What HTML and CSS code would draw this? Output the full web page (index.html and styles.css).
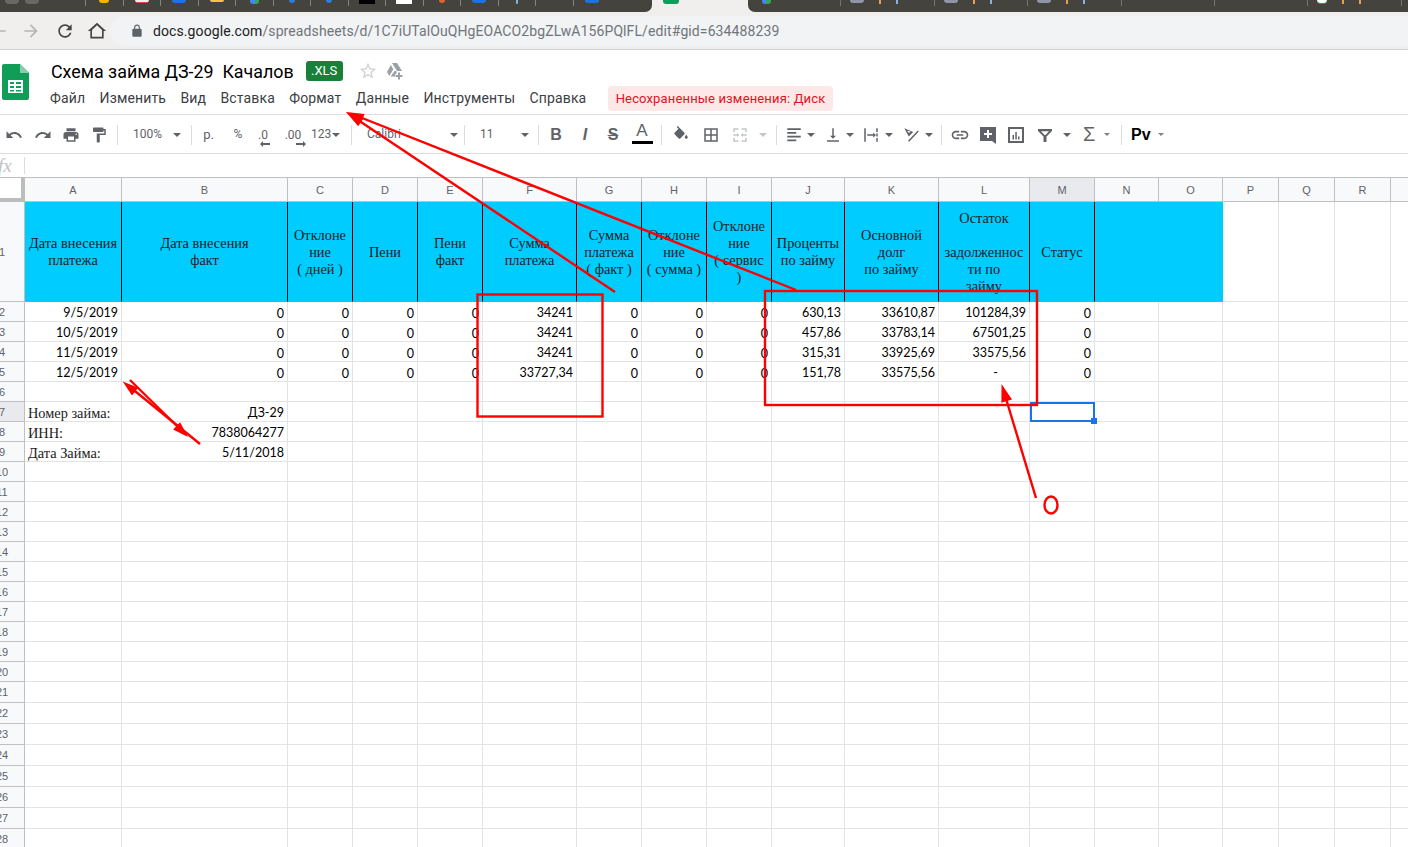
FILE: index.html
```html
<!DOCTYPE html>
<html lang="ru">
<head>
    <meta charset="UTF-8">
    <meta name="viewport" content="width=device-width, initial-scale=1.0">
    <title>Схема займа ДЗ-29 Качалов</title>
    <link rel="stylesheet" href="styles.css">
</head>
<body>

<!-- tab strip, only the bottom of it is on the picture -->
<div class="tabstrip">
    <div class="tabs-left">
        <div class="winbtns"><i></i><i></i></div>
        <div class="tab"><i class="fav fav-yellow"></i></div>
        <div class="tab"><i class="fav fav-gmail"></i></div>
        <div class="tab"><i class="fav fav-blue"></i></div>
        <div class="tab"><i class="fav fav-amber"></i></div>
        <div class="tab"><i class="fav fav-maps"></i></div>
        <div class="tab"><i class="fav fav-drop"></i></div>
        <div class="tab"><i class="fav fav-drop"></i></div>
        <div class="tab"><i class="fav fav-black"></i></div>
        <div class="tab"><i class="fav fav-white"></i></div>
        <div class="tab"><i class="fav fav-orange"></i></div>
        <div class="tab"><i class="fav fav-blue"></i></div>
        <div class="tab"><i class="fav fav-bar"></i></div>
        <div class="tab"></div>
        <div class="tab"><i class="fav fav-blue"></i></div>
    </div>
    <div class="tab-active"><i class="fav fav-sheets"></i></div>
    <div class="tabs-right">
        <div class="wide"><i class="fav fav-maps"></i></div>
        <div class="wide"><i class="fav fav-thumb"></i><i class="fav-o"></i><i class="fav-b"></i></div>
        <div class="wide"><i class="fav fav-thumb"></i><i class="fav-o"></i><i class="fav-b"></i></div>
        <div class="wide"><i class="fav fav-thumb"></i><i class="fav-o"></i><i class="fav-b"></i></div>
        <div class="wide"></div>
        <div class="wide"></div>
        <div class="wide"><i class="fav fav-ring"></i><i class="fav-o"></i><i class="fav-o"></i></div>
    </div>
</div>

<div class="addressbar">
    <svg class="nav-back" width="20" height="20" viewBox="0 0 24 24"><path fill="#b5b5b5" d="M20 11H7.830l5.590-5.590L12 4l-8 8 8 8 1.410-1.410L7.830 13H20z"/></svg>
    <svg class="nav-fwd" width="20" height="20" viewBox="0 0 24 24"><path fill="#b5b5b5" d="M12 4l-1.410 1.410L16.170 11H4v2h12.170l-5.580 5.590L12 20l8-8z"/></svg>
    <svg class="nav-reload" width="20" height="20" viewBox="0 0 24 24"><path fill="#444" d="M17.650 6.350C16.200 4.900 14.210 4 12 4c-4.420 0-7.990 3.580-7.990 8s3.570 8 7.990 8c3.730 0 6.840-2.550 7.730-6h-2.080c-.820 2.330-3.040 4-5.650 4-3.310 0-6-2.690-6-6s2.690-6 6-6c1.660 0 3.140.690 4.220 1.780L13 11h7V4l-2.350 2.350z"/></svg>
    <svg class="nav-home" width="20" height="20" viewBox="0 0 24 24"><path fill="#444" fill-rule="evenodd" d="M12 2L1 12h3v9h16v-9h3zM12 5.200l6 5.500V19H6v-8.300z"/></svg>
    <div class="omnibox">
        <svg width="14" height="14" viewBox="0 0 24 24"><path fill="#5f6368" d="M18 8h-1V6c0-2.760-2.240-5-5-5S7 3.240 7 6v2H6c-1.100 0-2 .900-2 2v10c0 1.100.900 2 2 2h12c1.100 0 2-.900 2-2V10c0-1.100-.900-2-2-2zM9 6c0-1.660 1.340-3 3-3s3 1.340 3 3v2H9V6z"/></svg>
        <span class="url"><b>docs.google.com</b>/spreadsheets/d/1C7iUTalOuQHgEOACO2bgZLwA156PQlFL/edit#gid=634488239</span>
    </div>
</div>

<header class="docheader">
    <svg class="logo" width="27" height="36" viewBox="0 0 27 36">
        <path fill="#0f9d58" d="M2 0h16l9 9v25a2 2 0 0 1-2 2H2a2 2 0 0 1-2-2V2a2 2 0 0 1 2-2z"/>
        <path fill="#87cdab" d="M18 0l9 9h-9z"/>
        <path fill="#fff" fill-rule="evenodd" d="M6 16h15v13H6zM8 18v2h4v-2zM14 18v2h5v-2zM8 22v2h4v-2zM14 22v2h5v-2zM8 26v1.500h4V26zM14 26v1.500h5V26z"/>
    </svg>
    <div class="docinfo">
        <div class="titlerow">
            <span class="doctitle">Схема займа ДЗ-29&nbsp; Качалов</span>
            <span class="xls">.XLS</span>
            <svg class="star" width="20" height="20" viewBox="0 0 24 24"><path fill="#d2d2d2" d="M22 9.240l-7.190-.620L12 2 9.190 8.630 2 9.240l5.460 4.730L5.820 21 12 17.270 18.180 21l-1.630-7.030L22 9.240zM12 15.400l-3.760 2.270 1-4.280-3.320-2.880 4.380-.380L12 6.100l1.710 4.040 4.380.380-3.320 2.880 1 4.280L12 15.400z"/></svg>
            <svg class="driveadd" width="18" height="18" viewBox="0 0 18 18"><path fill="#9aa0a6" d="M6 1h5l5 8h-5zM4.800 3l2.500 4.200L3.300 14 1 10zM8.500 9h2v3h-1.500v2.500H4.600z"/><path fill="#9aa0a6" d="M12 10.500h2V13h2.500v2H14v2.500h-2V15H9.500v-2H12z"/></svg>
        </div>
        <nav class="menubar">
            <a>Файл</a>
            <a>Изменить</a>
            <a>Вид</a>
            <a>Вставка</a>
            <a>Формат</a>
            <a>Данные</a>
            <a>Инструменты</a>
            <a>Справка</a>
            <span class="unsaved">Несохраненные изменения: Диск</span>
        </nav>
    </div>
</header>

<div class="toolbar">
    <div class="tool t-28"><svg width="18" height="18" viewBox="0 0 24 24"><path d="M12.500 8c-2.650 0-5.050.990-6.900 2.600L2 7v9h9l-3.620-3.620c1.390-1.160 3.160-1.880 5.120-1.880 3.540 0 6.550 2.310 7.600 5.500l2.370-.780C21.080 11.030 17.150 8 12.500 8z"/></svg></div>
    <div class="tool t-29"><svg width="18" height="18" viewBox="0 0 24 24"><path d="M18.400 10.600C16.550 8.990 14.150 8 11.500 8c-4.650 0-8.580 3.030-9.960 7.220L3.900 16c1.050-3.190 4.050-5.500 7.600-5.500 1.950 0 3.730.720 5.120 1.880L13 16h9V7l-3.600 3.600z"/></svg></div>
    <div class="tool t-28"><svg width="18" height="18" viewBox="0 0 24 24"><path d="M19 8H5c-1.660 0-3 1.340-3 3v6h4v4h12v-4h4v-6c0-1.660-1.340-3-3-3zm-3 11H8v-5h8v5zm3-7c-.550 0-1-.450-1-1s.450-1 1-1 1 .450 1 1-.450 1-1 1zm-1-9H6v4h12V3z"/></svg></div>
    <div class="tool t-28"><svg width="18" height="18" viewBox="0 0 24 24"><path d="M18 4V3c0-.550-.450-1-1-1H5c-.550 0-1 .450-1 1v4c0 .550.450 1 1 1h12c.550 0 1-.450 1-1V6h1v4H9v11c0 .550.450 1 1 1h2c.550 0 1-.450 1-1v-9h8V4h-3z"/></svg></div>
    <i class="sep sep-4"></i>
    <div class="tool t-zoom"><span class="tlabel">100%</span><i class="caret"></i></div>
    <i class="sep sep-3"></i>
    <div class="tool t-33 tlabel">р.</div>
    <div class="tool t-26 tlabel small">%</div>
    <div class="tool t-24 decimals tlabel small">.0<svg width="10" height="6" viewBox="0 0 10 6"><path d="M0 3l3-3v2h7v2H3v2z"/></svg></div>
    <div class="tool t-36 decimals tlabel small">.00<svg width="10" height="6" viewBox="0 0 10 6"><path d="M10 3L7 0v2H0v2h7v2z"/></svg></div>
    <div class="tool t-num"><span class="tlabel small">123</span><i class="caret"></i></div>
    <i class="sep sep-4"></i>
    <div class="tool t-font"><span class="tlabel">Calibri</span><i class="caret"></i></div>
    <i class="sep sep-4"></i>
    <div class="tool t-size"><span class="tlabel">11</span><i class="caret"></i></div>
    <i class="sep sep-4"></i>
    <div class="tool t-34 glyph glyph-b">B</div>
    <div class="tool t-24 glyph glyph-i">I</div>
    <div class="tool t-32 glyph glyph-s">S</div>
    <div class="tool t-26 textcolor"><span class="glyph-a">A</span><i class="colorbar"></i></div>
    <i class="sep sep-6"></i>
    <div class="tool t-38"><svg width="18" height="18" viewBox="0 0 24 24"><path d="M16.560 8.940L7.620 0 6.210 1.410l2.380 2.380-5.150 5.150c-.590.590-.590 1.540 0 2.120l5.500 5.500c.290.290.680.440 1.060.440s.770-.150 1.060-.440l5.500-5.500c.590-.580.590-1.530 0-2.120zM19 11.500s-2 2.170-2 3.500c0 1.100.900 2 2 2s2-.900 2-2c0-1.330-2-3.500-2-3.500z"/></svg></div>
    <div class="tool t-22"><svg width="18" height="18" viewBox="0 0 24 24"><path d="M3 3v18h18V3H3zm8 16H5v-6h6v6zm0-8H5V5h6v6zm8 8h-6v-6h6v6zm0-8h-6V5h6v6z"/></svg></div>
    <div class="tool t-36 disabled"><svg width="18" height="18" viewBox="0 0 24 24"><path d="M3 3h7v2H5v3H3zM14 3h7v5h-2V5h-5zM3 16h2v3h5v2H3zM19 16h2v5h-7v-2h5zM3 11h5V9l3 3-3 3v-2H3zM21 11h-5V9l-3 3 3 3v-2h5z"/></svg></div>
    <div class="tool t-10 disabled"><i class="caret"></i></div>
    <i class="sep sep-8"></i>
    <div class="tool t-align"><svg width="18" height="18" viewBox="0 0 24 24"><path d="M3 3h18v2.400H3zM3 8h12v2.400H3zM3 13h18v2.400H3zM3 18h12v2.400H3z"/></svg><i class="caret"></i></div>
    <div class="tool t-valign"><svg width="18" height="18" viewBox="0 0 24 24"><path d="M16 13h-3V3h-2v10H8l4 4 4-4zM4 19v2h16v-2H4z"/></svg><i class="caret"></i></div>
    <div class="tool t-wrap"><svg width="18" height="18" viewBox="0 0 24 24"><path d="M3 3h2v18H3zM19 3h2v5h-2zM19 10h2v4h-2zM19 16h2v5h-2zM7 11h8V8.500l3.500 3.500-3.500 3.500V13H7z"/></svg><i class="caret"></i></div>
    <div class="tool t-wrap"><svg width="18" height="18" viewBox="0 0 24 24"><path fill-rule="evenodd" d="M3 3l12 5-6 6zM6.500 6.300l3 3 2-2zM21 6l1.400 1.400L9.500 21 8 19.600z"/></svg><i class="caret"></i></div>
    <i class="sep sep-4"></i>
    <div class="tool t-36"><svg width="20" height="20" viewBox="0 0 24 24"><path d="M3.900 12c0-1.710 1.390-3.100 3.100-3.100h4V7H7c-2.760 0-5 2.240-5 5s2.240 5 5 5h4v-1.900H7c-1.710 0-3.100-1.390-3.100-3.100zM8 13h8v-2H8v2zm9-6h-4v1.900h4c1.710 0 3.100 1.390 3.100 3.100s-1.390 3.100-3.100 3.100h-4V17h4c2.760 0 5-2.240 5-5s-2.240-5-5-5z"/></svg></div>
    <div class="tool t-20"><svg width="18" height="18" viewBox="0 0 18 18"><path fill-rule="evenodd" d="M1 1h16v17l-4-3H1zM8 4v3H5v2h3v3h2V9h3V7h-3V4z"/></svg></div>
    <div class="tool t-36"><svg width="18" height="18" viewBox="0 0 18 18"><path fill-rule="evenodd" d="M1 1h16v16H1zM3 3v12h12V3zM5.500 9h1.500v4.500H5.500zM8.300 6h1.500v7.500H8.300zM11 10.500h1.500v3H11z"/></svg></div>
    <div class="tool t-filter"><svg width="18" height="18" viewBox="0 0 18 18"><path fill-rule="evenodd" d="M2 3h14v2l-5.500 5.500V16h-3v-5.500L2 5zM5 5.200l3.500 3.800h1L13 5.200z"/></svg><i class="caret"></i></div>
    <div class="tool t-sum"><span class="glyph-sum">Σ</span><i class="caret caret-s"></i></div>
    <i class="sep sep-4"></i>
    <div class="tool t-py"><span class="glyph-py">Pᴠ</span><i class="caret caret-s"></i></div>
</div>

<div class="formulabar">
    <span class="fx">fx</span>
    <i class="fxsep"></i>
</div>

<table class="sheet" id="sheet"></table>

<!-- red marks somebody drew on top of the screenshot -->
<svg class="marks" width="1408" height="847" viewBox="0 0 1408 847">
    <g fill="none" stroke="#f00" stroke-width="2.400">
        <path d="M615 292L352 116"/>
        <path d="M796 290L352 114"/>
        <path d="M1036 498L1004 392"/>
        <path d="M200 444L130 387"/>
        <path d="M130 380L182 431"/>
        <rect x="477.500" y="294.500" width="125" height="122"/>
        <rect x="765" y="291" width="272" height="114"/>
        <ellipse cx="1051" cy="505" rx="6.500" ry="8.500"/>
    </g>
    <g fill="#f00">
        <path d="M346 112L363.800 117.800 358.200 126.200z"/>
        <path d="M346 112L364.500 114 360.900 123.300z"/>
        <path d="M1001.500 384L1012 399.600 1001.400 402.800z"/>
        <path d="M122.700 381.500L138.200 387.700 132 395.500z"/>
        <path d="M188 437L173.100 429.400 180.100 422.200z"/>
    </g>
</svg>

<script src="script.js"></script>
</body>
</html>
```

FILE: styles.css
```css
body {
    margin: 0;
    width: 1408px;
    height: 847px;
    overflow: hidden;
    position: relative;
    background: #fff;
    font-family: Roboto, "Liberation Sans", sans-serif;
    color: #202124;
}

/* tab strip */
.tabstrip {
    display: flex;
    height: 12px;
    background: #f0efee;
    overflow: hidden;
}
.tabs-left, .tabs-right {
    display: flex;
    background: #45433e;
    height: 12px;
}
.tabs-left {
    width: 652px;
    border-bottom-right-radius: 7px;
}
.tabs-right {
    flex: 1;
    border-bottom-left-radius: 7px;
}
.tab-active {
    width: 96px;
    padding-left: 11px;
    box-sizing: border-box;
}
.winbtns {
    width: 85px;
    display: flex;
    gap: 6px;
    padding-left: 5px;
    box-sizing: border-box;
}
.winbtns i {
    width: 14px;
    height: 4px;
    background: #6a6864;
    border-radius: 0 0 7px 7px;
}
.tab {
    width: 37.500px;
    height: 6px;
    border-left: 1px solid #86847f;
    box-sizing: border-box;
    display: flex;
    justify-content: center;
}
.wide {
    width: 93.400px;
    height: 6px;
    border-right: 1px solid #77756f;
    box-sizing: border-box;
    display: flex;
    gap: 15px;
    padding-left: 9px;
}
.wide:first-child {
    padding-left: 14px;
}
.fav {
    display: block;
    width: 14px;
    height: 4px;
    border-radius: 0 0 3px 3px;
}
.fav-yellow { background: #f4b400; width: 10px; height: 3px; border-radius: 0 0 5px 5px; }
.fav-gmail { background: #eee; border-bottom: 1px solid #d44; height: 2px; }
.fav-blue { background: #1a73e8; height: 3px; }
.fav-amber { background: #f6c445; height: 2px; }
.fav-maps { background: linear-gradient(90deg, #4285f4 50%, #34a853 50%); width: 9px; height: 4px; }
.fav-drop { background: #2a7de1; width: 6px; height: 3px; border-radius: 0 0 3px 3px; }
.fav-black { background: #000; height: 4px; border-radius: 0; width: 16px; }
.fav-white { background: #fff; height: 4px; border-radius: 0; width: 16px; }
.fav-orange { background: #e2622b; width: 6px; height: 3px; }
.fav-bar { background: #8ab4d8; width: 2px; }
.fav-sheets { background: #0f9d58; width: 16px; height: 4px; }
.fav-thumb { background: #8f96a8; width: 14px; height: 3px; }
.fav-ring { background: #fff; width: 10px; height: 3px; border-bottom: 1px solid #1e9e5a; border-radius: 0 0 5px 5px; }
.fav-o, .fav-b {
    display: block;
    width: 2px;
    height: 4px;
    background: #e8a14f;
}
.fav-b {
    background: #8ab4d8;
}

/* address bar */
.addressbar {
    height: 37px;
    background: #f0efee;
    border-bottom: 1px solid #d2d2d2;
    display: flex;
    align-items: center;
    box-sizing: content-box;
}
.nav-back {
    margin-left: -11px;
    margin-right: 12px;
}
.nav-fwd {
    margin-right: 14px;
}
.nav-reload {
    margin-right: 12px;
}
.omnibox {
    margin-left: 3px;
    flex: 1;
    height: 30px;
    background: #f1f3f4;
    border-radius: 15px 0 0 15px;
    display: flex;
    align-items: center;
    gap: 9px;
    padding-left: 20px;
}
.url {
    font-size: 14px;
    letter-spacing: 0.1px;
    color: #70757a;
    white-space: nowrap;
}
.url b {
    font-weight: 400;
    color: #202124;
}

/* title and menu */
.docheader {
    height: 64px;
    border-bottom: 1px solid #dadce0;
    display: flex;
}
.logo {
    margin: 14px 0 0 2px;
}
.docinfo {
    margin-left: 21px;
}
.titlerow {
    display: flex;
    align-items: center;
    height: 28px;
    margin-top: 7px;
}
.doctitle {
    font-size: 17.850px;
    color: #000;
    white-space: pre;
    margin-left: 1px;
}
.xls {
    background: #188038;
    color: #fff;
    font-size: 13px;
    width: 37px;
    height: 20px;
    line-height: 20px;
    text-align: center;
    border-radius: 3px;
    margin-left: 12px;
}
.star {
    margin-left: 15px;
}
.driveadd {
    margin-left: 8px;
}
.menubar {
    display: flex;
    align-items: center;
    height: 26px;
    font-size: 14px;
    letter-spacing: 0.15px;
    color: #3c4043;
    gap: 14.300px;
}
.unsaved {
    background: #fce8e6;
    color: #e3121f;
    font-size: 13px;
    letter-spacing: 0.15px;
    height: 25px;
    line-height: 25px;
    padding: 0 8px;
    border-radius: 4px;
    margin-left: 7px;
}

/* toolbar */
.toolbar {
    height: 37px;
    padding-top: 1px;
    border-bottom: 1px solid #dadce0;
    display: flex;
    align-items: center;
    color: #5f6368;
}
.tool {
    display: flex;
    align-items: center;
    justify-content: center;
    height: 24px;
    flex: none;
    box-sizing: border-box;
}
.tool svg {
    fill: #5f6368;
    flex: none;
}
.t-10 { width: 10px; }
.t-20 { width: 20px; }
.t-22 { width: 22px; }
.t-24 { width: 24px; }
.t-26 { width: 26px; }
.t-28 { width: 28px; }
.t-29 { width: 29px; }
.t-32 { width: 32px; }
.t-33 { width: 33px; }
.t-34 { width: 34px; }
.t-36 { width: 36px; }
.t-38 { width: 38px; }
.t-zoom { width: 70px; justify-content: flex-start; padding-left: 15px; gap: 11px; }
.t-num { width: 36px; gap: 1px; justify-content: flex-start; }
.t-font { width: 108px; justify-content: flex-start; padding-left: 15px; gap: 49px; }
.t-size { width: 69px; justify-content: flex-start; padding-left: 15px; gap: 27px; }
.t-align { width: 41px; justify-content: flex-start; padding-left: 8px; gap: 4px; }
.t-valign { width: 39px; justify-content: flex-start; padding-left: 6px; gap: 4px; }
.t-wrap { width: 40px; justify-content: flex-start; padding-left: 5px; gap: 5px; }
.t-filter { width: 41px; justify-content: flex-start; padding-left: 2px; gap: 9px; }
.t-sum { width: 42px; justify-content: flex-start; padding-left: 8px; gap: 9px; }
.t-py { width: 50px; justify-content: flex-start; padding-left: 9px; gap: 7px; }
.tlabel {
    font-size: 12px;
    color: #5f6368;
    margin-top: -2px;
}
.t-33.tlabel {
    font-size: 13px;
    margin-top: 0;
}
.decimals {
    position: relative;
    height: 24px;
    margin-top: 0;
}
.decimals svg {
    position: absolute;
    right: 5px;
    bottom: 0;
}
.glyph {
    font-family: "Liberation Sans", sans-serif;
    font-size: 16px;
}
.glyph-b {
    font-weight: 700;
}
.glyph-i {
    font-style: italic;
    font-weight: 700;
}
.glyph-s {
    text-decoration: line-through;
    font-weight: 700;
}
.textcolor {
    flex-direction: column;
    height: 26px;
    justify-content: flex-start;
}
.glyph-a {
    font-family: "Liberation Sans", sans-serif;
    font-size: 17px;
    line-height: 17px;
}
.colorbar {
    display: block;
    width: 21px;
    height: 3px;
    background: #000;
    margin-top: 2px;
}
.glyph-sum {
    font-family: "Liberation Sans", sans-serif;
    font-size: 20px;
}
.glyph-py {
    font-family: "Liberation Sans", sans-serif;
    font-size: 16px;
    font-weight: 700;
    color: #000;
}
.caret {
    width: 0;
    height: 0;
    flex: none;
    border-left: 4px solid transparent;
    border-right: 4px solid transparent;
    border-top: 4px solid #5f6368;
}
.caret-s {
    border-left-width: 3px;
    border-right-width: 3px;
    border-top-width: 3px;
    opacity: 0.8;
}
.disabled svg {
    fill: #c4c7c9;
}
.disabled .caret {
    border-top-color: #c4c7c9;
}
.sep {
    display: block;
    flex: none;
    width: 1px;
    height: 20px;
    background: #dadce0;
}
.sep-3 { margin-left: 3px; }
.sep-4 { margin-left: 4px; }
.sep-6 { margin-left: 6px; }
.sep-8 { margin-left: 8px; }

/* formula bar */
.formulabar {
    height: 23px;
    border-bottom: 1px solid #c0c0c0;
    display: flex;
    align-items: center;
    overflow: hidden;
}
.fx {
    width: 24px;
    margin-left: -2px;
    font-family: "Liberation Serif", serif;
    font-style: italic;
    font-size: 19px;
    color: #bdc1c6;
}
.fxsep {
    display: block;
    width: 1px;
    height: 17px;
    background: #dadce0;
    margin-left: 2px;
}

/* the sheet */
.sheet {
    table-layout: fixed;
    border-collapse: separate;
    border-spacing: 0;
    width: 1469px;
    margin-left: -22px;
}
.sheet td {
    box-sizing: border-box;
    padding: 0;
    border-right: 1px solid #e2e3e3;
    border-bottom: 1px solid #e2e3e3;
    font-weight: 400;
}
.sheet .colhead {
    height: 24px;
    background: #f8f9fa;
    border-right: 1px solid #c0c0c0;
    border-bottom: 1px solid #c0c0c0;
    text-align: center;
    font-family: "Liberation Sans", sans-serif;
    font-size: 11px;
    color: #5f6368;
}
.sheet .colhead.active {
    background: #e8eaed;
}
.sheet .corner {
    background: #fff;
    border-right: 4px solid #bdbdbd;
    border-bottom: 4px solid #bdbdbd;
}
.sheet .rowhead {
    background: #f8f9fa;
    border-right: 1px solid #c0c0c0;
    border-bottom: 1px solid #c0c0c0;
    padding-left: 2px;
    text-align: center;
    font-family: "Liberation Sans", sans-serif;
    font-size: 11px;
    color: #5f6368;
}
.sheet .rowhead.active {
    background: #e8eaed;
}
.sheet .title {
    height: 100px;
    padding-top: 1px;
    background: #00ccff;
    border-right: 1px solid #000;
    border-bottom-color: #00ccff;
    text-align: center;
    font-family: "Liberation Serif", serif;
    font-size: 14.350px;
    line-height: 17px;
    color: #1b1b1b;
    white-space: pre-line;
}
.sheet .title.plain {
    border-right-color: #00ccff;
}
.sheet .title.none {
    background: #fff;
    border-right-color: #e2e3e3;
    border-bottom-color: #e2e3e3;
}
.sheet .cell {
    height: 20px;
    padding: 0 3px;
    vertical-align: bottom;
    text-align: right;
    font-family: Lato, "Liberation Sans", sans-serif;
    font-size: 12.500px;
    line-height: 17px;
    color: #000;
    white-space: nowrap;
}
.sheet .cell.zero {
    line-height: 15px;
}
.sheet .cell.label {
    text-align: left;
    font-family: "Liberation Serif", serif;
    font-size: 14.350px;
    line-height: 16px;
    color: #1b1b1b;
}
.sheet .cell.dash {
    padding-right: 31px;
}
.sheet .cell.selected {
    position: relative;
    border: 2px solid #1a73e8;
}
.handle {
    position: absolute;
    right: -4px;
    bottom: -4px;
    width: 6px;
    height: 6px;
    background: #1a73e8;
}

/* drawn over everything */
.marks {
    position: absolute;
    left: 0;
    top: 0;
    pointer-events: none;
}
```

FILE: script.js
```js
// builds the grid: header row, tall title row, then the data and the empty rows
// S is only there to fill the window, its letter falls outside
const colLetters = ['A', 'B', 'C', 'D', 'E', 'F', 'G', 'H', 'I', 'J', 'K', 'L', 'M', 'N', 'O', 'P', 'Q', 'R', ''];
const colWidths = [97, 166, 65, 65, 65, 94, 65, 65, 65, 73, 94, 91, 65, 64, 64, 56, 56, 56, 56];

const titles = [
    'Дата внесения\nплатежа',
    'Дата внесения\nфакт',
    'Отклоне\nние\n( дней )',
    'Пени',
    'Пени\nфакт',
    'Сумма\nплатежа',
    'Сумма\nплатежа\n( факт )',
    'Отклоне\nние\n( сумма )',
    'Отклоне\nние\n( сервис\n)',
    'Проценты\nпо займу',
    'Основной\nдолг\nпо займу',
    'Остаток\n\nзадолженнос\nти по\nзайму',
    'Статус'
];

const data = {
    2: ['9/5/2019', 0, 0, 0, 0, '34241', 0, 0, 0, '630,13', '33610,87', '101284,39', 0],
    3: ['10/5/2019', 0, 0, 0, 0, '34241', 0, 0, 0, '457,86', '33783,14', '67501,25', 0],
    4: ['11/5/2019', 0, 0, 0, 0, '34241', 0, 0, 0, '315,31', '33925,69', '33575,56', 0],
    5: ['12/5/2019', 0, 0, 0, 0, '33727,34', 0, 0, 0, '151,78', '33575,56', '-', 0],
    7: ['Номер займа:', 'ДЗ-29'],
    8: ['ИНН:', '7838064277'],
    9: ['Дата Займа:', '5/11/2018']
};

const sheet = document.getElementById('sheet');

const colgroup = document.createElement('colgroup');
[47].concat(colWidths).forEach(w => {
    const col = document.createElement('col');
    col.style.width = w + 'px';
    colgroup.appendChild(col);
});
sheet.appendChild(colgroup);

function addCell(row, className, text) {
    const td = document.createElement('td');
    td.className = className;
    if (text !== undefined) td.textContent = text;
    row.appendChild(td);
    return td;
}

// column letters
const headRow = sheet.insertRow();
addCell(headRow, 'colhead corner');
colLetters.forEach(letter => {
    addCell(headRow, letter === 'M' ? 'colhead active' : 'colhead', letter);
});

// row 1
const titleRow = sheet.insertRow();
addCell(titleRow, 'rowhead', 1);
colLetters.forEach((letter, i) => {
    if (i < titles.length) addCell(titleRow, 'title', titles[i]);
    else if (i < 15) addCell(titleRow, 'title plain');
    else addCell(titleRow, 'title none');
});

// the rest
for (let n = 2; n <= 28; n++) {
    const row = sheet.insertRow();
    const values = data[n] || [];
    const th = addCell(row, n === 7 ? 'rowhead active' : 'rowhead', n);
    row.style.height = n > 20 ? '21px' : '20px';
    th.style.height = row.style.height;
    colLetters.forEach((letter, i) => {
        const v = values[i];
        let cls = 'cell';
        if (v === 0) cls += ' zero';
        if (v === '-') cls += ' dash';
        if (n >= 7 && n <= 9 && i === 0) cls += ' label';
        const td = addCell(row, cls, v);
        if (n === 7 && letter === 'M') {
            td.className = 'cell selected';
            const handle = document.createElement('i');
            handle.className = 'handle';
            td.appendChild(handle);
        }
    });
}
```
